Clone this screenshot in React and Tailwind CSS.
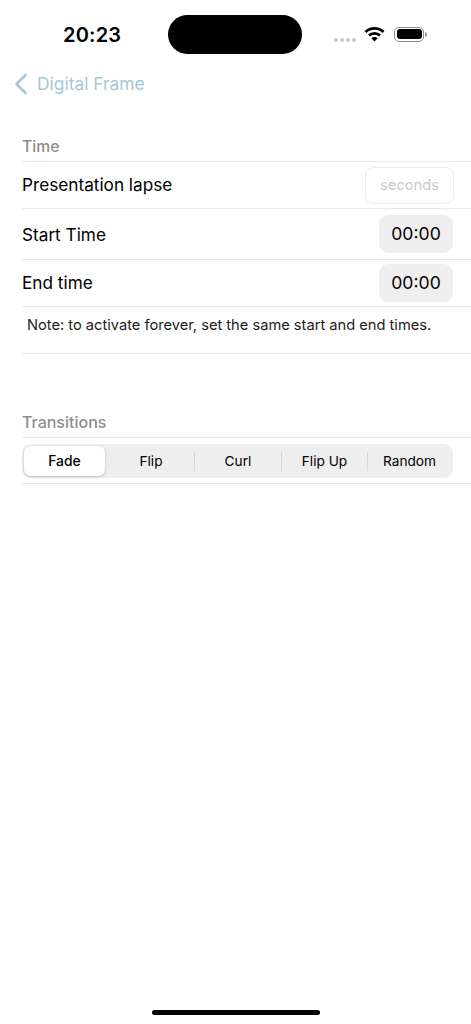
export default function App() {
  const transitions = [
    { name: "Fade", cell: "w-[84px]" },
    { name: "Flip", cell: "w-[86px]" },
    { name: "Curl", cell: "w-[87px]" },
    { name: "Flip Up", cell: "w-[86px]" },
    { name: "Random", cell: "w-[84px]" },
  ];

  return (
    <div className="h-[1024px] w-[471px] overflow-hidden bg-white flex flex-col font-['Inter',sans-serif] text-black">
      {/* status bar */}
      <div className="h-[54px] pt-[15px] flex items-start relative shrink-0">
        <div className="w-[168px] h-[39px] flex items-center pl-[63px] text-[20px] leading-none font-semibold tracking-[0.2px] shrink-0">
          20:23
        </div>
        <div className="w-[134px] h-[39px] rounded-full bg-black shrink-0" />
        <div className="flex items-center h-[39px] pl-[32px] shrink-0">
          <div className="flex gap-[2px] mt-[11px] mr-[8px]">
            <span className="w-[4px] h-[4px] rounded-full bg-[#c8c8c8]" />
            <span className="w-[4px] h-[4px] rounded-full bg-[#c8c8c8]" />
            <span className="w-[4px] h-[4px] rounded-full bg-[#c8c8c8]" />
            <span className="w-[4px] h-[4px] rounded-full bg-[#c8c8c8]" />
          </div>
          <svg width="21" height="16" viewBox="0 0 21 16" className="mb-[2px]">
            <path d="M1.5 6 A13 13 0 0 1 19.5 6" fill="none" stroke="#000" strokeWidth="2.8" />
            <path d="M5 9.6 A8 8 0 0 1 16 9.6" fill="none" stroke="#000" strokeWidth="2.8" />
            <path d="M7.4 12.2 A4.4 4.4 0 0 1 13.6 12.2 L10.5 15.6 Z" fill="#000" />
          </svg>
          <div className="ml-[9px] mb-[1px] flex items-center">
            <div className="w-[30px] h-[15px] rounded-[5px] border border-[#8e8e8e] p-[1.5px]">
              <div className="w-full h-full rounded-[3px] bg-black" />
            </div>
            <span className="w-[2px] h-[5px] ml-[1px] rounded-r-full bg-[#9a9a9a]" />
          </div>
        </div>
      </div>

      {/* nav */}
      <div className="h-[60px] flex items-center pl-[14px] text-[#a5c8d8] shrink-0">
        <svg width="14" height="22" viewBox="0 0 14 22" fill="none">
          <path d="M11.5 2 L2.5 11 L11.5 20" stroke="currentColor" strokeWidth="2.6" strokeLinecap="round" strokeLinejoin="round" />
        </svg>
        <span className="ml-[9px] text-[17.4px] leading-none">Digital Frame</span>
      </div>

      {/* time section */}
      <div className="ml-[22px] mt-[18px]">
        <div className="h-[30px] flex items-center text-[15.7px] font-medium text-[#8e8e8e] border-b border-[#e8e8e8]">
          Time
        </div>
        <div className="h-[47px] pr-[17px] flex items-center justify-between border-b border-[#e8e8e8]">
          <span className="text-[17.2px]">Presentation lapse</span>
          <div className="w-[89px] h-[37px] rounded-[8px] border border-[#ebebeb] flex items-center justify-center text-[14.7px] text-[#c9c9c9]">
            seconds
          </div>
        </div>
        <div className="h-[51px] pr-[18px] flex items-center justify-between border-b border-[#e8e8e8]">
          <span className="text-[17.2px] pt-[1px]">Start Time</span>
          <div className="w-[74px] h-[38px] rounded-[9px] bg-[#efefef] flex items-center justify-center text-[17.6px]">
            00:00
          </div>
        </div>
        <div className="h-[47px] pr-[18px] flex items-center justify-between border-b border-[#e8e8e8]">
          <span className="text-[17.2px]">End time</span>
          <div className="w-[74px] h-[38px] rounded-[9px] bg-[#efefef] flex items-center justify-center text-[17.6px]">
            00:00
          </div>
        </div>
        <div className="h-[47px] pl-[5px] pt-[9px] text-[14.65px] leading-[18px] text-[#1c1c1c] border-b border-[#e8e8e8]">
          Note: to activate forever, set the same start and end times.
        </div>
      </div>

      {/* transitions section */}
      <div className="ml-[22px] mt-[54px]">
        <div className="h-[30px] pb-[2px] flex items-center text-[16px] font-medium text-[#8e8e8e] border-b border-[#e8e8e8]">
          Transitions
        </div>
        <div className="h-[46px] pt-[6px] border-b border-[#e8e8e8]">
          <div className="w-[431px] h-[34px] rounded-[9px] bg-[#eeeeee] flex items-center p-[2px]">
            {transitions.map((t, i) => (
              <div key={t.name} className={`${t.cell} h-full flex items-center shrink-0`}>
                {i > 1 && <span className="w-px h-[19px] bg-[#d6d6d6] shrink-0" />}
                {i === 0 ? (
                  <div className="w-[81px] h-full rounded-[7px] bg-white shadow-[0_1px_3px_rgba(0,0,0,0.2)] flex items-center justify-center text-[13.9px] font-medium">
                    {t.name}
                  </div>
                ) : (
                  <div className="flex-1 h-full flex items-center justify-center text-[13.7px]">
                    {t.name}
                  </div>
                )}
              </div>
            ))}
          </div>
        </div>
      </div>

      {/* home indicator */}
      <div className="mt-auto mb-[9px] mx-auto w-[168px] h-[5px] rounded-full bg-black" />
    </div>
  );
}
